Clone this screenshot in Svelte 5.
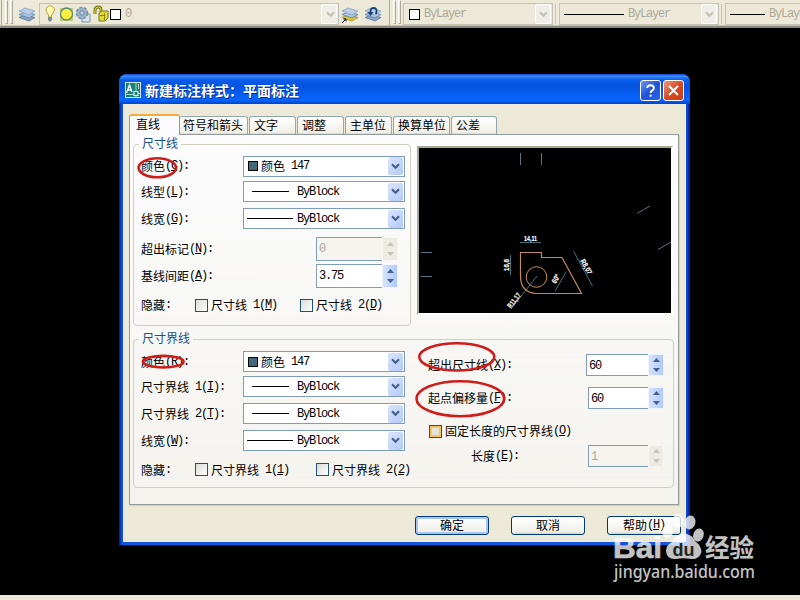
<script>
  const tabs = [
    { name: '直线', w: 51, on: true },
    { name: '符号和箭头', w: 68 },
    { name: '文字', w: 47 },
    { name: '调整', w: 47 },
    { name: '主单位', w: 47 },
    { name: '换算单位', w: 57 },
    { name: '公差', w: 46 }
  ];

  const lineRows = [
    { label: '颜色(&C):', kind: 'color' },
    { label: '线型(&L):', kind: 'short' },
    { label: '线宽(&G):', kind: 'long' }
  ];

  const extRows = [
    { label: '颜色(&R):', kind: 'color' },
    { label: '尺寸界线 1(&I):', kind: 'short' },
    { label: '尺寸界线 2(&T):', kind: 'short' },
    { label: '线宽(&W):', kind: 'long' }
  ];

  // Splits a caption into half-width runs, full-width runs and &-marked mnemonics.
  function runs(s) {
    return (s.match(/&.|[ -%'-~]+|[^ -~]+/g) ?? []).map((t) =>
      t[0] === '&' ? { t: t.slice(1), c: 'a u' } : { t, c: t.charCodeAt(0) < 128 ? 'a' : 'z' }
    );
  }
</script>

{#snippet txt(s)}<span class="txt">{#each runs(s) as r}<span class={r.c}>{r.t}</span>{/each}</span>{/snippet}

{#snippet chevron()}
  <span class="drop"><svg width="9" height="7" viewBox="0 0 9 7"><path d="M1 1.200 L4.500 4.700 L8 1.200" fill="none" stroke="currentColor" stroke-width="2.200" /></svg></span>
{/snippet}

{#snippet combo(kind)}
  <div class="combo">
    {#if kind === 'color'}
      <i class="swatch"></i>{@render txt('颜色 147')}
    {:else}
      <i class="rule {kind}"></i>{@render txt('ByBlock')}
    {/if}
    {@render chevron()}
  </div>
{/snippet}

{#snippet spin(value, w, off, wide)}
  <div class="spin" class:off class:wide style:width="{w}px">
    <div class="field">{@render txt(value)}</div>
    <div class="arrows">
      <svg width="7" height="4"><path d="M0 4 L3.500 0 L7 4Z" fill="currentColor" /></svg>
      <svg width="7" height="4"><path d="M0 0 L3.500 4 L7 0Z" fill="currentColor" /></svg>
    </div>
  </div>
{/snippet}

{#snippet check(label, hot)}
  <div class="check"><i class:hot></i>{@render txt(label)}</div>
{/snippet}

{#snippet layers(gold)}
  <path d="M0 10.500 L6 8 L16 10.500 L10 14Z" fill={gold ? '#e0cb2c' : '#8ba6c6'} stroke={gold ? '#8d7c18' : '#486a92'} stroke-width=".7" />
  <path d="M0 7.500 L6 5 L16 7.500 L10 11Z" fill="#adc4df" stroke="#557399" stroke-width=".7" />
  <path d="M0 4 L6 1 L16 4 L10 8Z" fill="#b9cfe9" stroke="#7e9bbd" stroke-width=".7" />
{/snippet}

<div class="screen">
  <div class="toolbar">
    <i class="edge"></i><i class="grip"></i><i class="grip two"></i>
    <svg class="ic first" width="17" height="16" viewBox="0 0 17 16">{@render layers(false)}</svg>
    <div class="tcombo layer">
      <svg width="72" height="18" viewBox="0 0 72 18">
        <path d="M8.500 12 V10 Q6 7 6 5 A4.200 4.200 0 0 1 14.400 5 Q14.400 7 11.500 10 V12Z" fill="#fff9b0" stroke="#b3a447" />
        <path d="M8 12 h4 v3 l-2 2 l-2 -2z" fill="#7d8a99" />
        <path d="M20 3 h13 v13 h-13z" fill="#c3c981" />
        <circle cx="26.500" cy="9" r="6" fill="#ffed3d" stroke="#4f8c80" stroke-width="1.300" />
        <path d="M42 9 h8 v8 h-8z" fill="#dce3e8" stroke="#7795ae" />
        <circle cx="42" cy="8" r="5.500" fill="#9fb4c7" stroke="#6f91af" stroke-dasharray="3 1.500" stroke-width="1.600" />
        <circle cx="42" cy="8" r="2.200" fill="#c3d1dc" stroke="#6886a2" />
        <path d="M55 9 V5 Q55 2 58.500 2 Q61 2 61 5 V7" fill="none" stroke="#77771a" stroke-width="3" />
        <path d="M55 9 V5 Q55 2 58.500 2 Q61 2 61 5 V7" fill="none" stroke="#e2da32" />
        <path d="M59 8 L62 6 H68 V13 L65 16 H59Z" fill="#e2da32" stroke="#77771a" />
        <path d="M64.500 8 V15 M60 10.500 h5" stroke="#88821b" />
      </svg>
      <i class="box"></i><span class="a">0</span>{@render chevron()}
    </div>
    <svg class="ic l1" width="17" height="17" viewBox="0 0 17 17">{@render layers(true)}<path d="M0 16 L4 12 M1.500 12 H4 V14.500" stroke="#001" fill="none" /></svg>
    <svg class="ic l2" width="17" height="17" viewBox="0 0 17 17">{@render layers(false)}<path d="M11 7 Q13 1 8.500 1 Q5 1 5.500 6" fill="none" stroke="#173f73" stroke-width="1.800" /><path d="M2.500 5 H8.500 L5.500 9Z" fill="#173f73" /></svg>
    <i class="edge e2"></i><i class="grip g3"></i><i class="grip two"></i>
    <div class="tcombo col"><i class="box"></i><span class="a">ByLayer</span>{@render chevron()}</div>
    <i class="sep"></i>
    <div class="tcombo ltype"><i class="ln"></i><span class="a">ByLayer</span>{@render chevron()}</div>
    <i class="sep"></i>
    <div class="tcombo lw"><i class="ln"></i><span class="a">ByLayer</span></div>
  </div>

  <div class="dialog">
    <div class="title">
      <svg class="logo" width="16" height="16" viewBox="0 0 16 16">
        <rect x=".5" y=".5" width="15" height="15" fill="#16807b" stroke="#d3e8de" />
        <path d="M1.500 11 L4.500 3 L7 10 M3 8 H7" fill="none" stroke="#fff" stroke-width="1.400" />
        <path d="M11 1 V9 M1 12.500 H9 M11 13 V15 M13 11.500 H15" stroke="#9fe0ca" />
        <rect x="9" y="9.500" width="4" height="4" fill="#16807b" stroke="#fff" />
        <path d="M13.500 2 v5" stroke="#aee0d4" />
      </svg>
      <span class="cap">新建标注样式：平面标注</span>
      <span class="tb help"><svg width="19" height="19"><path d="M6.200 7 Q6.200 4.200 9.500 4.200 Q12.900 4.200 12.900 6.900 Q12.900 8.600 11 9.600 Q9.600 10.400 9.600 12" fill="none" stroke="#fff" stroke-width="1.900" /><rect x="8.600" y="13.600" width="2" height="2" fill="#fff" /></svg></span>
      <span class="tb close"><svg width="19" height="19"><path d="M5 5 L14 14 M14 5 L5 14" stroke="#fff" stroke-width="2" /></svg></span>
    </div>

    <div class="body">
      <div class="tabs">
        {#each tabs as t}
          <div class="tab" class:on={t.on} style:width="{t.w}px">{t.name}</div>
        {/each}
      </div>

      <div class="panel">
        <div class="top">
          <div class="group g1">
            <div class="legend">尺寸线</div>
            {#each lineRows as r, i}
              <div class="row r{i}">{@render txt(r.label)}{@render combo(r.kind)}</div>
            {/each}
            <div class="row r3">{@render txt('超出标记(&N):')}{@render spin('0', 82, true)}</div>
            <div class="row r4">{@render txt('基线间距(&A):')}{@render spin('3.75', 82, false)}</div>
            <div class="row r5"><span class="hide">{@render txt('隐藏:')}</span>{@render check('尺寸线 1(&M)')}<div class="c2">{@render check('尺寸线 2(&D)')}</div></div>
          </div>

          <div class="preview">
            <svg width="252" height="165" viewBox="420 149 252 165">
              <g fill="none" stroke="#5d7282" stroke-width="1">
                <path d="M520.500 153 V165 M541.500 153 V165 M421 252.500 H432 M421 276.500 H432 M637 213.500 L650 206 M658 249.500 L671 242" />
                <path d="M520 242.500 H541 M510.500 255 V275 M573.500 251 L592.500 286 M566 272 L555 291 M537 276 L511 309" stroke="#477080" />
              </g>
              <path d="M520.500 252.500 H541.500 V257.500 H562 L581.500 293.500 H537 Q520.500 293 520.500 276Z" fill="none" stroke="#c38b5c" stroke-width="1.200" />
              <circle cx="536.500" cy="277" r="10.300" fill="none" stroke="#c38b5c" />
              <g fill="#fff" stroke="#fff" stroke-width=".2" font-family="Liberation Sans, sans-serif" font-size="7.500" font-weight="bold" text-anchor="middle">
                <text x="530.500" y="241" textLength="13" lengthAdjust="spacingAndGlyphs">14,11</text>
                <text transform="translate(509 265) rotate(-90)" textLength="12" lengthAdjust="spacingAndGlyphs">16,6</text>
                <text transform="translate(516 302) rotate(-52)" textLength="17" lengthAdjust="spacingAndGlyphs">R11,17</text>
                <text transform="translate(584 268) rotate(61)" textLength="16" lengthAdjust="spacingAndGlyphs">R8,07</text>
                <text transform="translate(558 280) rotate(-60)" textLength="9" lengthAdjust="spacingAndGlyphs">60°</text>
              </g>
            </svg>
          </div>
        </div>

        <div class="group g2">
          <div class="legend">尺寸界线</div>
          <div class="cols">
            <div class="left">
              {#each extRows as r, i}
                <div class="row s{i}">{@render txt(r.label)}{@render combo(r.kind)}</div>
              {/each}
              <div class="row s4"><span class="hide">{@render txt('隐藏:')}</span>{@render check('尺寸界线 1(&1)')}<div class="c3">{@render check('尺寸界线 2(&2)')}</div></div>
            </div>
            <div class="right">
              <div class="row q0">{@render txt('超出尺寸线(&X):')}{@render spin('60', 78, false, true)}</div>
              <div class="row q1">{@render txt('起点偏移量(&F):')}{@render spin('60', 76, false, true)}</div>
              <div class="row q2">{@render check('固定长度的尺寸界线(&O)', true)}</div>
              <div class="row q3">{@render txt('长度(&E):')}{@render spin('1', 76, true, true)}</div>
            </div>
          </div>
        </div>
      </div>

      <div class="buttons">
        <div class="btn def">{@render txt('确定')}</div>
        <div class="btn">{@render txt('取消')}</div>
        <div class="btn">{@render txt('帮助(&H)')}</div>
      </div>
    </div>
  </div>

  <div class="status"></div>

  <svg class="over" width="800" height="600" viewBox="0 0 800 600">
    <g fill="none" stroke="#cc1f1c" stroke-width="2.600">
      <ellipse cx="157.300" cy="167.800" rx="18.700" ry="9.500" />
      <ellipse cx="163.300" cy="361.700" rx="20.300" ry="5.800" />
      <ellipse cx="456.800" cy="356.900" rx="37.500" ry="13.600" />
      <ellipse cx="460.300" cy="398.700" rx="43.800" ry="17.500" />
    </g>
    <g fill="#fff" opacity=".76">
      <text x="613" y="558" font-family="Liberation Sans, sans-serif" font-weight="bold" font-size="29.500" stroke="#fff" stroke-width=".6" textLength="49" lengthAdjust="spacingAndGlyphs">Bai</text>
      <path d="M666 551 Q666 545 672 542 Q676 534 684 533.500 Q692 534 695 541 Q701.500 546 701.500 552 Q699 560 691 559 Q683 557.500 676 559 Q667 560 666 551Z" />
      <ellipse cx="667.500" cy="531.500" rx="5.400" ry="6.500" />
      <ellipse cx="678" cy="521" rx="5.400" ry="7" />
      <ellipse cx="690" cy="522.500" rx="5.400" ry="7" transform="rotate(15 690 522.500)" />
      <ellipse cx="698.500" cy="535" rx="5.200" ry="6.700" transform="rotate(20 698.500 535)" />
      <text x="705" y="557" font-family="Noto Sans CJK SC, sans-serif" font-weight="bold" font-size="24.500">经验</text>
      <text x="614" y="577.500" font-family="Noto Sans, sans-serif" font-size="17.500" font-weight="500" textLength="141" lengthAdjust="spacingAndGlyphs">jingyan.baidu.com</text>
    </g>
    <text x="672.500" y="555.500" fill="#222" font-family="Liberation Sans, sans-serif" font-weight="bold" font-size="18.500" textLength="22" lengthAdjust="spacingAndGlyphs">du</text>
  </svg>
</div>

<style>
  :global(body) { margin: 0; background: #000; }
  .screen { position: relative; width: 800px; height: 600px; overflow: hidden; background: #000; display: flex; flex-direction: column; font: 12px/14px "Noto Sans CJK SC", sans-serif; color: #000; }
  .screen :global(*) { box-sizing: border-box; }
  i { display: block; flex: none; }
  svg { display: block; flex: none; }
  .txt { display: inline-flex; align-items: center; height: 14px; white-space: pre; flex: none; }
  .a { font: 12px/14px "Liberation Mono", monospace; letter-spacing: -1.2px; white-space: pre; }
  .u { text-decoration: underline; text-underline-offset: 1px; }

  .toolbar { display: flex; align-items: flex-start; height: 28px; flex: none; background: #ece9d8; border-bottom: 2px solid #8b8a7e; box-shadow: inset 0 -1px #c5c3b0; overflow: hidden; color: #aca899; }
  .edge { width: 2px; height: 25px; border-right: 1px solid #aca899; margin-right: 3px; }
  .grip { width: 3px; height: 24px; border: 1px solid #fff; border-right-color: #aca899; border-bottom-color: #aca899; }
  .two { margin-left: 2px; }
  .ic { margin-top: 7px; }
  .first { margin-left: 6px; }
  .tcombo { display: flex; align-items: center; height: 22px; margin-top: 3px; border: 1px solid #c2c3b3; flex: none; padding-right: 1px; }
  .tcombo .drop { width: 16px; height: 20px; border: 1px solid #fff; background: #efeee8; color: #c2c0b4; }
  .box { width: 11px; height: 11px; background: #fff; border: 1px solid #000; }
  .layer { width: 300px; margin-left: 3px; padding-left: 0; }
  .layer svg:first-child { margin-right: -2px; }
  .layer .a, .tcombo .a { margin-left: 4px; }
  .l1 { margin-left: 3px; }
  .l2 { margin-left: 6px; }
  .e2 { margin-left: 6px; margin-right: 3px; }
  .col { width: 150px; margin-left: 2px; padding-left: 5px; }
  .sep { width: 1px; height: 20px; margin: 4px 3px 0 2px; background: #c2c3b3; }
  .ltype { width: 160px; padding-left: 4px; }
  .lw { width: 120px; padding-left: 4px; }
  .ln { height: 1px; width: 60px; background: #000; }
  .lw .ln { width: 35px; }

  .drop { display: flex; align-items: center; justify-content: center; width: 15px; height: 18px; margin-left: auto; border-radius: 2px; background: linear-gradient(135deg, #dae5fe, #b3c9f5); color: #47618c; flex: none; }

  .dialog { width: 571px; height: 472px; margin: 46px 0 0 119px; flex: none; border-radius: 8px 8px 0 0; background: linear-gradient(90deg, #0016a2, #1354dc 3px, #1354dc 567px, #0016a2 571px); padding: 0 4px 4px; border-bottom: 1px solid #001194; overflow: hidden; }
  .title { display: flex; align-items: center; height: 30px; margin: 0 -4px; padding: 2px 6px 0 6px; background: linear-gradient(#0a3fc9, #3a8dfb 2px, #0a5bea 6px, #0453e0 12px, #0560f6 22px, #0566ff 26px, #0142c8); }
  .cap { margin-left: 4px; color: #fff; font-size: 14px; font-weight: 700; line-height: 16px; text-shadow: 1px 1px #0a2c86; }
  .tb { width: 21px; height: 21px; border: 1px solid #fff; border-radius: 3px; }
  .help { margin-left: auto; background: linear-gradient(135deg, #6e96f2, #2152d6 50%, #2a66e8); }
  .close { margin-left: 2px; background: linear-gradient(135deg, #f09b80, #d84a22 50%, #c93c12); }
  .body { height: 438px; background: #ece9d8; padding: 11px 7px 0 6px; }

  .tabs { display: flex; align-items: flex-end; height: 19px; }
  .tab { height: 18px; margin-right: 1px; border: 1px solid #91a7b4; border-bottom: 0; border-radius: 3px 3px 0 0; background: linear-gradient(#fff, #f0efe8 90%, #dcd9cb); padding-left: 4px; line-height: 16px; white-space: nowrap; flex: none; }
  .tab.on { height: 21px; margin: 0 0 -1px; position: relative; border-color: #919b9c; border-top: 2px solid #f3ad3c; background: #fcfcfe; padding-left: 6px; line-height: 15px; }
  .tab.on + .tab { padding-left: 3px; border-left: 0; margin-right: 1px; }

  .panel { height: 371px; width: 550px; border: 1px solid #919b9c; background: linear-gradient(#fcfcfd, #f4f3ee); box-shadow: 1px 1px #d5d1c0; padding: 9px 0 0 3px; }
  .top { display: flex; height: 195px; }
  .group { border: 1px solid #d0d0bf; border-radius: 4px; }
  .legend { width: max-content; height: 14px; margin: -9px 0 0 5px; padding: 0 3px; background: #fbfbfb; color: #1d4f8c; line-height: 14px; }
  .g1 { width: 278px; height: 182px; padding: 0 5px 0 7px; }
  .g1 .legend { margin-left: -2px; }
  .row { display: flex; align-items: center; }
  .row > .combo, .row > .spin { margin-left: auto; }
  .r0 { height: 28px; margin-top: 2px; }
  .r1 { height: 23px; }
  .r2 { height: 31px; }
  .r3 { height: 30px; }
  .r4 { height: 24px; }
  .r5 { height: 34px; }
  .g1 .spin { margin-right: 7px; }
  .hide { width: 54px; flex: none; }
  .combo { display: flex; align-items: center; width: 162px; height: 21px; border: 1px solid #7f9db9; background: #fff; padding: 0 1px 0 4px; }
  .swatch { width: 10px; height: 10px; margin-right: 3px; border: 1px solid #000; background: #42697a; }
  .rule { height: 1px; background: #000; }
  .rule.short { width: 37px; margin: 0 8px 0 4px; }
  .rule.long { width: 46px; margin: 0 4px 0 -1px; }
  .spin { display: flex; height: 24px; flex: none; }
  .field { flex: 1; border: 1px solid #7f9db9; border-right: 0; background: #fff; padding: 2px 0 0 2px; }
  .arrows { display: flex; flex-direction: column; align-items: center; justify-content: center; gap: 6px; width: 16px; background: linear-gradient(90deg, #d5e1fd, #b3caf6); border: 1px solid #eef3fd; color: #435f8d; }
  .wide { height: 22px; }
  .off .field { background: #f5f4ee; color: #aca899; }
  .off .arrows { background: #edece4; color: #c5c3b7; border-color: #f7f6f2; }
  .check { display: flex; align-items: center; flex: none; }
  .check i { width: 13px; height: 13px; margin-right: 3px; border: 1px solid #1c5180; background: linear-gradient(135deg, #dcdcd7, #fff); }
  .check i.hot { box-shadow: inset 0 0 0 2px #f8c367; background: #e6e2d8; }
  .c2 { margin-left: auto; margin-right: 23px; }

  .preview { width: 256px; height: 169px; margin: 2px 0 0 6px; padding: 1px 0 0 1px; border: 2px solid #aca899; border-right-color: #fff; border-bottom-color: #fff; background: #000; overflow: hidden; }

  .g2 { width: 541px; height: 149px; padding: 0 0 0 7px; }
  .g2 .legend { margin-left: -2px; background: #f8f8f6; }
  .cols { display: flex; }
  .left { width: 264px; flex: none; padding-top: 3px; }
  .s0 { height: 27px; }
  .s1 { height: 23px; }
  .s2 { height: 31px; }
  .s3 { height: 23px; }
  .s4 { height: 35px; }
  .c3 { margin-left: 27px; flex: none; }
  .right { width: 244px; margin-left: 15px; padding: 5px 0 0 8px; }
  .q0 { height: 30px; }
  .q1 { height: 35px; }
  .q2 { height: 32px; padding-left: 1px; }
  .q3 { height: 18px; padding-left: 43px; }

  .buttons { display: flex; justify-content: flex-end; gap: 22px; margin: 11px -2px 0 0; }
  .btn { display: flex; align-items: center; justify-content: center; width: 74px; height: 19px; border: 1px solid #003c74; border-radius: 3px; background: linear-gradient(#fff, #f1f0ea 85%, #d8d2c4); }
  .btn .txt { margin-top: -2px; }
  .def { box-shadow: inset 0 0 0 2px #a9c6f2; }

  .status { height: 5px; margin-top: auto; background: #ece9d8; flex: none; }
  .over { position: absolute; left: 0; top: 0; pointer-events: none; }
</style>
